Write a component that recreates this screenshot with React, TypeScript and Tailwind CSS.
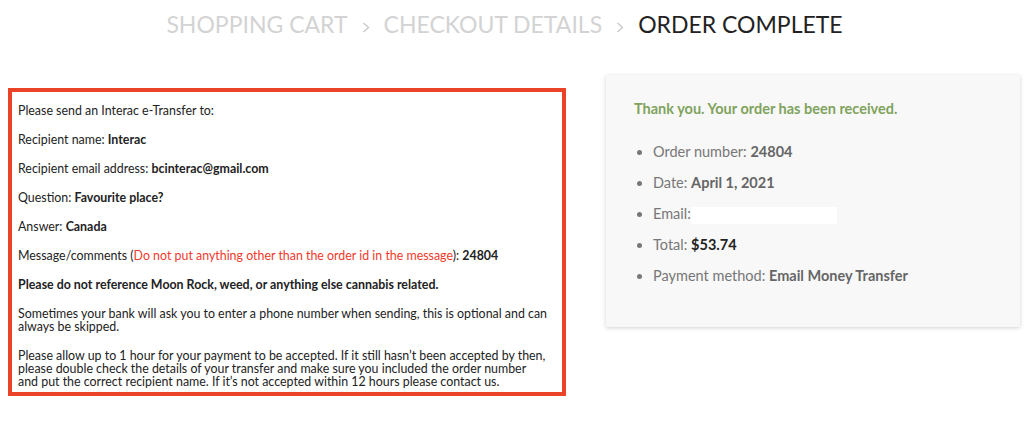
function Chevron() {
  return (
    <svg width="8" height="11" viewBox="0 0 8 11" className="mt-[6px]" fill="none">
      <path d="M1.5 1 L6.5 5.5 L1.5 10" stroke="#c9c9c9" strokeWidth="1.4" />
    </svg>
  );
}

export default function App() {
  return (
    <div className="w-[1029px] h-[422px] bg-white font-['Lato',sans-serif] overflow-hidden">
      <div className="flex items-center justify-center gap-[14px] pt-[9px] pr-[20px] text-[23px] leading-[30px] uppercase">
        <span className="text-[#d3d3d3]">Shopping Cart</span>
        <Chevron />
        <span className="text-[#d3d3d3]">Checkout Details</span>
        <Chevron />
        <span className="text-[#222]">Order Complete</span>
      </div>

      <div className="flex items-start mt-[49px] pl-[8px]">
        <div className="w-[558px] h-[308px] border-[4px] border-[#ea4328] pl-[6px] pr-[6px] pt-[12px] text-[12.4px] leading-[13px] text-[#222]">
          <p className="mb-[16px]">Please send an Interac e-Transfer to:</p>
          <p className="mb-[16px]">
            Recipient name: <b>Interac</b>
          </p>
          <p className="mb-[16px]">
            Recipient email address: <b>bcinterac@gmail.com</b>
          </p>
          <p className="mb-[16px]">
            Question: <b>Favourite place?</b>
          </p>
          <p className="mb-[16px]">
            Answer: <b>Canada</b>
          </p>
          <p className="mb-[16px]">
            Message/comments (
            <span className="text-[#f2382a]">Do not put anything other than the order id in the message</span>):{" "}
            <b>24804</b>
          </p>
          <p className="mb-[16px] font-bold">
            Please do not reference Moon Rock, weed, or anything else cannabis related.
          </p>
          <p className="mb-[16px]">
            Sometimes your bank will ask you to enter a phone number when sending, this is optional and can
            <br />
            always be skipped.
          </p>
          <p>
            Please allow up to 1 hour for your payment to be accepted. If it still hasn’t been accepted by then,
            <br />
            please double check the details of your transfer and make sure you included the order number
            <br />
            and put the correct recipient name. If it’s not accepted within 12 hours please contact us.
          </p>
        </div>

        <div className="ml-[40px] -mt-[13px] w-[414px] h-[252px] bg-[#f8f8f8] shadow-[0_1px_4px_rgba(0,0,0,0.18)] pl-[28px] pt-[24px]">
          <p className="text-[14.5px] font-bold text-[#7fa35d] leading-[20px]">Thank you. Your order has been received.</p>
          <ul className="mt-[23px] list-disc pl-[19px] text-[14.5px] leading-[20px] text-[#777] marker:text-[#777]">
            <li className="mb-[11px]">
              Order number: <b className="text-[#666]">24804</b>
            </li>
            <li className="mb-[11px]">
              Date: <b className="text-[#666]">April 1, 2021</b>
            </li>
            <li className="mb-[11px]">
              Email: <span className="inline-block align-middle w-[146px] h-[17px] bg-white -ml-[4px]" />
            </li>
            <li className="mb-[11px]">
              Total: <b className="text-[#222]">$53.74</b>
            </li>
            <li>
              Payment method: <b className="text-[#666]">Email Money Transfer</b>
            </li>
          </ul>
        </div>
      </div>
    </div>
  );
}
